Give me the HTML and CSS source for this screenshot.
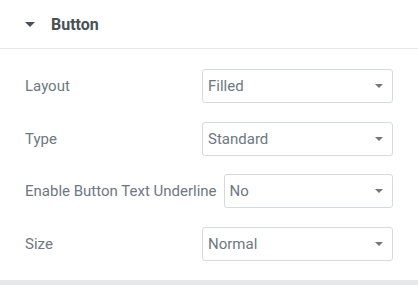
FILE: index.html
```html
<!DOCTYPE html>
<html lang="en">
  <head>
    <meta charset="UTF-8" />
    <meta name="viewport" content="width=device-width, initial-scale=1.0" />
    <title>Button Settings</title>
    <link rel="stylesheet" href="styles.css">
  </head>
  <body>
    <div class="panel">
      <div class="section-header">
        <span class="caret"></span>
        <h2>Button</h2>
      </div>

      <div class="section-body">
        <div class="control">
          <label for="layout">Layout</label>
          <div class="select-wrap">
            <select id="layout">
              <option>Filled</option>
              <option>Outline</option>
            </select>
          </div>
        </div>
        <div class="control">
          <label for="type">Type</label>
          <div class="select-wrap">
            <select id="type">
              <option>Standard</option>
              <option>Custom</option>
            </select>
          </div>
        </div>
        <div class="control">
          <label for="underline">Enable Button Text Underline</label>
          <div class="select-wrap">
            <select id="underline">
              <option>No</option>
              <option>Yes</option>
            </select>
          </div>
        </div>
        <div class="control">
          <label for="size">Size</label>
          <div class="select-wrap">
            <select id="size">
              <option>Normal</option>
              <option>Small</option>
              <option>Large</option>
            </select>
          </div>
        </div>
      </div>

      <div class="panel-footer"></div>
    </div>
  </body>
</html>
```

FILE: styles.css
```css
:root {
  --text: #495157;
  --muted: #6d7882;
  --border: #d5dadf;
  --divider: #e6e9ec;
  --radius: 3px;
}

* {
  margin: 0;
  padding: 0;
  box-sizing: border-box;
  font-family: Roboto, "Liberation Sans", sans-serif;
}

body {
  background: white;
  -webkit-font-smoothing: antialiased;
}

.panel {
  width: 418px;
  background: white;
}

.section-header {
  height: 49px;
  display: flex;
  align-items: center;
  padding: 0 25px;
  border-bottom: 1px solid var(--divider);
}

.caret {
  width: 0;
  height: 0;
  border-left: 5px solid transparent;
  border-right: 5px solid transparent;
  border-top: 5px solid var(--text);
  margin-right: 16px;
  margin-top: 1px;
}

.section-header h2 {
  font-size: 16px;
  font-weight: 700;
  color: var(--text);
}

.section-body {
  padding: 20px 25px 19px;
  display: flex;
  flex-direction: column;
  gap: 18.5px;
}

.control {
  display: flex;
  align-items: center;
}

.control label {
  min-width: 170px;
  margin-right: 7px;
  font-size: 15px;
  color: var(--muted);
  white-space: nowrap;
}

.select-wrap {
  position: relative;
  flex: 1;
}

.select-wrap::after {
  content: "";
  position: absolute;
  right: 10px;
  top: 15px;
  border-left: 4.5px solid transparent;
  border-right: 4.5px solid transparent;
  border-top: 4.5px solid var(--muted);
  pointer-events: none;
}

select {
  width: 100%;
  height: 34px;
  padding: 0 28px 0 5px;
  border: 1px solid var(--border);
  border-radius: var(--radius);
  background: white;
  font-size: 15px;
  color: var(--muted);
  appearance: none;
  -webkit-appearance: none;
  outline: none;
}

.panel-footer {
  height: 7px;
  background: var(--divider);
}
```
